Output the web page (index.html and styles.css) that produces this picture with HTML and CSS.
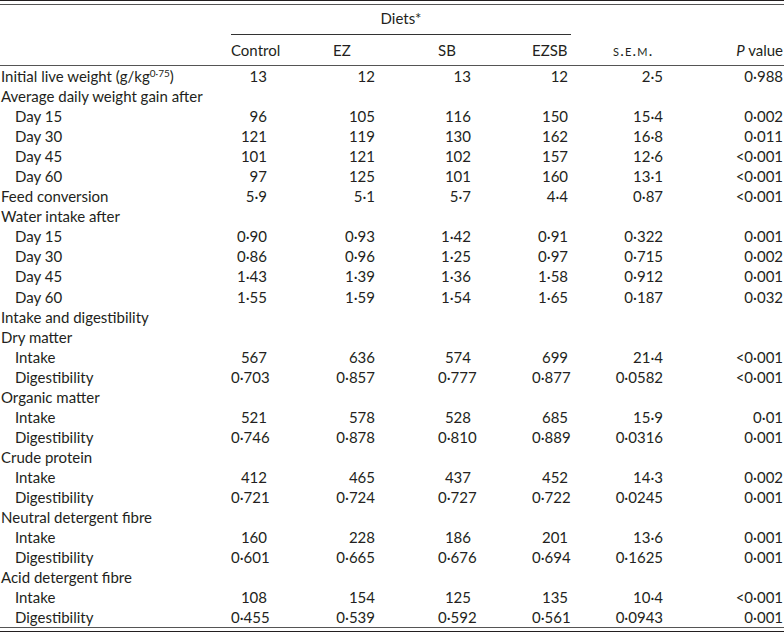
FILE: index.html
```html
<!DOCTYPE html>
<html>
<head>
<meta charset="utf-8">
<link rel="stylesheet" href="styles.css">
</head>
<body>
<div class="rule-double top"></div>
<table class="data">
  <colgroup>
    <col class="c-label"><col class="c-control"><col class="c-ez"><col class="c-sb"><col class="c-ezsb"><col class="c-sem"><col class="c-p">
  </colgroup>
  <thead>
    <tr class="h1">
      <th></th>
      <th colspan="4" class="diets"><span>Diets*</span></th>
      <th></th>
      <th></th>
    </tr>
    <tr class="h2">
      <th></th>
      <th>Control</th>
      <th>EZ</th>
      <th>SB</th>
      <th>EZSB</th>
      <th class="sem">s.e.m.</th>
      <th class="pv"><i>P</i> value</th>
    </tr>
  </thead>
  <tbody>
    <tr><td class="lbl">Initial live weight (g/kg<sup>0·75</sup>)</td><td>13</td><td>12</td><td>13</td><td>12</td><td>2·5</td><td>0·988</td></tr>
    <tr><td class="lbl">Average daily weight gain after</td><td></td><td></td><td></td><td></td><td></td><td></td></tr>
    <tr><td class="lbl in">Day 15</td><td>96</td><td>105</td><td>116</td><td>150</td><td>15·4</td><td>0·002</td></tr>
    <tr><td class="lbl in">Day 30</td><td>121</td><td>119</td><td>130</td><td>162</td><td>16·8</td><td>0·011</td></tr>
    <tr><td class="lbl in">Day 45</td><td>101</td><td>121</td><td>102</td><td>157</td><td>12·6</td><td>&lt;0·001</td></tr>
    <tr><td class="lbl in">Day 60</td><td>97</td><td>125</td><td>101</td><td>160</td><td>13·1</td><td>&lt;0·001</td></tr>
    <tr><td class="lbl">Feed conversion</td><td>5·9</td><td>5·1</td><td>5·7</td><td>4·4</td><td>0·87</td><td>&lt;0·001</td></tr>
    <tr><td class="lbl">Water intake after</td><td></td><td></td><td></td><td></td><td></td><td></td></tr>
    <tr><td class="lbl in">Day 15</td><td>0·90</td><td>0·93</td><td>1·42</td><td>0·91</td><td>0·322</td><td>0·001</td></tr>
    <tr><td class="lbl in">Day 30</td><td>0·86</td><td>0·96</td><td>1·25</td><td>0·97</td><td>0·715</td><td>0·002</td></tr>
    <tr><td class="lbl in">Day 45</td><td>1·43</td><td>1·39</td><td>1·36</td><td>1·58</td><td>0·912</td><td>0·001</td></tr>
    <tr><td class="lbl in">Day 60</td><td>1·55</td><td>1·59</td><td>1·54</td><td>1·65</td><td>0·187</td><td>0·032</td></tr>
    <tr><td class="lbl">Intake and digestibility</td><td></td><td></td><td></td><td></td><td></td><td></td></tr>
    <tr><td class="lbl">Dry matter</td><td></td><td></td><td></td><td></td><td></td><td></td></tr>
    <tr><td class="lbl in">Intake</td><td>567</td><td>636</td><td>574</td><td>699</td><td>21·4</td><td>&lt;0·001</td></tr>
    <tr><td class="lbl in">Digestibility</td><td>0·703</td><td>0·857</td><td>0·777</td><td>0·877</td><td>0·0582</td><td>&lt;0·001</td></tr>
    <tr><td class="lbl">Organic matter</td><td></td><td></td><td></td><td></td><td></td><td></td></tr>
    <tr><td class="lbl in">Intake</td><td>521</td><td>578</td><td>528</td><td>685</td><td>15·9</td><td>0·01</td></tr>
    <tr><td class="lbl in">Digestibility</td><td>0·746</td><td>0·878</td><td>0·810</td><td>0·889</td><td>0·0316</td><td>0·001</td></tr>
    <tr><td class="lbl">Crude protein</td><td></td><td></td><td></td><td></td><td></td><td></td></tr>
    <tr><td class="lbl in">Intake</td><td>412</td><td>465</td><td>437</td><td>452</td><td>14·3</td><td>0·002</td></tr>
    <tr><td class="lbl in">Digestibility</td><td>0·721</td><td>0·724</td><td>0·727</td><td>0·722</td><td>0·0245</td><td>0·001</td></tr>
    <tr><td class="lbl">Neutral detergent fibre</td><td></td><td></td><td></td><td></td><td></td><td></td></tr>
    <tr><td class="lbl in">Intake</td><td>160</td><td>228</td><td>186</td><td>201</td><td>13·6</td><td>0·001</td></tr>
    <tr><td class="lbl in">Digestibility</td><td>0·601</td><td>0·665</td><td>0·676</td><td>0·694</td><td>0·1625</td><td>0·001</td></tr>
    <tr><td class="lbl">Acid detergent fibre</td><td></td><td></td><td></td><td></td><td></td><td></td></tr>
    <tr><td class="lbl in">Intake</td><td>108</td><td>154</td><td>125</td><td>135</td><td>10·4</td><td>&lt;0·001</td></tr>
    <tr><td class="lbl in">Digestibility</td><td>0·455</td><td>0·539</td><td>0·592</td><td>0·561</td><td>0·0943</td><td>0·001</td></tr>
  </tbody>
</table>
<div class="rule-double bottom"></div>
</body>
</html>
```

FILE: styles.css
```css
html, body {
  margin: 0;
  padding: 0;
  background: #ffffff;
}
body {
  width: 784px;
  font-family: Lato, "Noto Sans", sans-serif;
  font-size: 15px;
  color: #231f20;
}
.rule-double {
  border-top: 1px solid #231f20;
  border-bottom: 1px solid #555;
  box-sizing: border-box;
}
.rule-double.top {
  height: 5px;
  border-top-width: 1.5px;
}
.rule-double.bottom {
  height: 5px;
  border-top-color: #555;
  border-bottom-color: #231f20;
}
.data {
  width: 784px;
  border-collapse: collapse;
  table-layout: fixed;
}
.c-label { width: 231px; }
.c-control { width: 102px; }
.c-ez { width: 105px; }
.c-sb { width: 94px; }
.c-ezsb { width: 39px; }
.c-sem { width: 116px; }
.c-p { width: 97px; }

th {
  font-weight: normal;
  text-align: left;
  padding: 0;
  white-space: nowrap;
}
.h1 th {
  height: 25px;
  padding-bottom: 4px;
  vertical-align: middle;
}
.h1 .diets {
  text-align: center;
  border-bottom: 1px solid #333;
}
.h2 th {
  height: 30px;
  border-bottom: 1px solid #555;
}
.h2 .sem {
  padding-left: 42px;
  font-variant: small-caps;
  font-size: 15px;
  letter-spacing: 1.2px;
}
.h2 .pv {
  text-align: right;
  padding-right: 1px;
}
td {
  height: 20.05px;
  padding: 0;
  text-align: right;
  white-space: nowrap;
  line-height: 20px;
}
td:nth-child(2) { padding-right: 66px; }
td:nth-child(3) { padding-right: 63px; }
td:nth-child(4) { padding-right: 61px; }
td:nth-child(5) { padding-right: 3px; }
td:nth-child(6) { padding-right: 24px; }
td:nth-child(7) { padding-right: 1px; }
td.lbl {
  text-align: left;
  padding-left: 1px;
}
td.lbl.in {
  padding-left: 15px;
}
sup {
  font-size: 10px;
  line-height: 0;
  vertical-align: 5px;
}
```
